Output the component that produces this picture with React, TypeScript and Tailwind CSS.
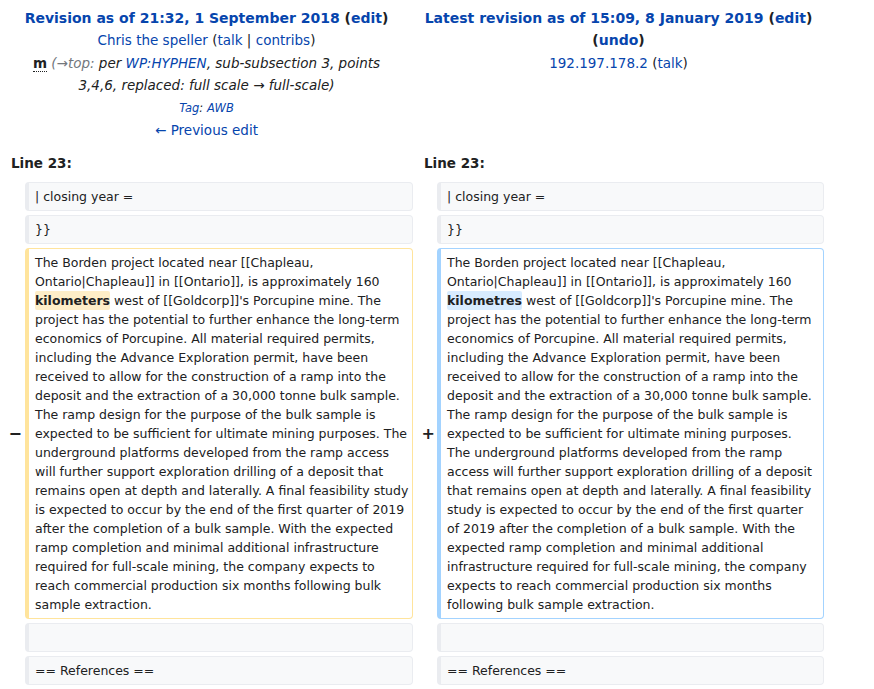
const LEFT_LINES = [
  "The Borden project located near [[Chapleau,",
  "Ontario|Chapleau]] in [[Ontario]], is approximately 160",
  "__CHANGE__ west of [[Goldcorp]]'s Porcupine mine. The",
  "project has the potential to further enhance the long-term",
  "economics of Porcupine. All material required permits,",
  "including the Advance Exploration permit, have been",
  "received to allow for the construction of a ramp into the",
  "deposit and the extraction of a 30,000 tonne bulk sample.",
  "The ramp design for the purpose of the bulk sample is",
  "expected to be sufficient for ultimate mining purposes. The",
  "underground platforms developed from the ramp access",
  "will further support exploration drilling of a deposit that",
  "remains open at depth and laterally. A final feasibility study",
  "is expected to occur by the end of the first quarter of 2019",
  "after the completion of a bulk sample. With the expected",
  "ramp completion and minimal additional infrastructure",
  "required for full-scale mining, the company expects to",
  "reach commercial production six months following bulk",
  "sample extraction.",
];

const RIGHT_LINES = [
  "The Borden project located near [[Chapleau,",
  "Ontario|Chapleau]] in [[Ontario]], is approximately 160",
  "__CHANGE__ west of [[Goldcorp]]'s Porcupine mine. The",
  "project has the potential to further enhance the long-term",
  "economics of Porcupine. All material required permits,",
  "including the Advance Exploration permit, have been",
  "received to allow for the construction of a ramp into the",
  "deposit and the extraction of a 30,000 tonne bulk sample.",
  "The ramp design for the purpose of the bulk sample is",
  "expected to be sufficient for ultimate mining purposes.",
  "The underground platforms developed from the ramp",
  "access will further support exploration drilling of a deposit",
  "that remains open at depth and laterally. A final feasibility",
  "study is expected to occur by the end of the first quarter",
  "of 2019 after the completion of a bulk sample. With the",
  "expected ramp completion and minimal additional",
  "infrastructure required for full-scale mining, the company",
  "expects to reach commercial production six months",
  "following bulk sample extraction.",
];

const link = "text-[#0645ad]";

function Box({ kind, children }: { kind: "ctx" | "del" | "add"; children?: React.ReactNode }) {
  const tone =
    kind === "ctx"
      ? "bg-[#f8f9fa] border-[#eaecf0]"
      : kind === "del"
      ? "bg-white border-[#ffe49c]"
      : "bg-white border-[#a3d3ff]";
  return (
    <div
      className={`min-h-[29px] rounded-[4px] border border-l-4 ${tone} py-[4px] pl-[6px] pr-[4px] text-[12.5px] leading-[19px] whitespace-nowrap`}
    >
      {children}
    </div>
  );
}

function Lines({ lines, word, kind }: { lines: string[]; word: string; kind: "del" | "add" }) {
  const hl = kind === "del" ? "bg-[#feeec8]" : "bg-[#d8ecff]";
  return (
    <>
      {lines.map((line, i) => {
        if (line.startsWith("__CHANGE__")) {
          return (
            <div key={i}>
              <span className={`${hl} rounded-[2px] py-[2px] font-bold`}>{word}</span>
              {line.slice("__CHANGE__".length)}
            </div>
          );
        }
        return <div key={i}>{line}</div>;
      })}
    </>
  );
}

function Marker({ sign, right }: { sign: string; right?: boolean }) {
  return (
    <div
      className={`flex items-center justify-end ${right ? "pr-[2px]" : "pr-[3px]"} text-[16px] font-bold text-[#202122]`}
    >
      {sign}
    </div>
  );
}

export default function App() {
  return (
    <div className="w-[874px] min-h-[689px] bg-white font-['DejaVu_Sans',sans-serif] text-[#202122]">
      <div className="grid grid-cols-[25px_388px_24px_387px] gap-y-[4px]">
        {/* Revision headers */}
        <div className="col-span-2 pt-[7px] text-center text-[13.5px] leading-[22.4px]">
          <div className="text-[14px] font-bold">
            <span className={link}>Revision as of 21:32, 1 September 2018</span> (
            <span className={link}>edit</span>)
          </div>
          <div>
            <span className={link}>Chris the speller</span> (<span className={link}>talk</span> |{" "}
            <span className={link}>contribs</span>)
          </div>
          <div>
            <abbr className="font-bold no-underline border-b border-dotted border-[#202122]">m</abbr>{" "}
            <span className="italic">
              <span className="text-[#72777d]">(→top:</span> per{" "}
              <span className={link}>WP:HYPHEN</span>, sub-subsection 3, points
              <br />
              3,4,6, replaced: full scale → full-scale)
            </span>
          </div>
          <div className="text-[11.5px] italic leading-[22px]">
            <span className={link}>Tag</span>: <span className={link}>AWB</span>
          </div>
          <div className={link}>← Previous edit</div>
        </div>
        <div className="col-span-2 pt-[7px] text-center text-[13.5px] leading-[22.4px]">
          <div className="text-[14px] font-bold">
            <span className={link}>Latest revision as of 15:09, 8 January 2019</span> (
            <span className={link}>edit</span>)
          </div>
          <div className="text-[14px] font-bold">
            (<span className={link}>undo</span>)
          </div>
          <div>
            <span className={link}>192.197.178.2</span> (<span className={link}>talk</span>)
          </div>
        </div>

        {/* Line numbers */}
        <div className="col-span-2 pl-[11px] pt-[7px] pb-[4px] text-[13.5px] font-bold leading-[22px]">
          Line 23:
        </div>
        <div className="col-span-2 pl-[11px] pt-[7px] pb-[4px] text-[13.5px] font-bold leading-[22px]">
          Line 23:
        </div>

        {/* Context */}
        <div />
        <Box kind="ctx">| closing year =</Box>
        <div />
        <Box kind="ctx">| closing year =</Box>

        <div />
        <Box kind="ctx">{"}}"}</Box>
        <div />
        <Box kind="ctx">{"}}"}</Box>

        {/* Changed paragraph */}
        <Marker sign="−" />
        <Box kind="del">
          <Lines lines={LEFT_LINES} word="kilometers" kind="del" />
        </Box>
        <Marker sign="+" right />
        <Box kind="add">
          <Lines lines={RIGHT_LINES} word="kilometres" kind="add" />
        </Box>

        <div />
        <Box kind="ctx" />
        <div />
        <Box kind="ctx" />

        <div />
        <Box kind="ctx">== References ==</Box>
        <div />
        <Box kind="ctx">== References ==</Box>
      </div>
    </div>
  );
}
